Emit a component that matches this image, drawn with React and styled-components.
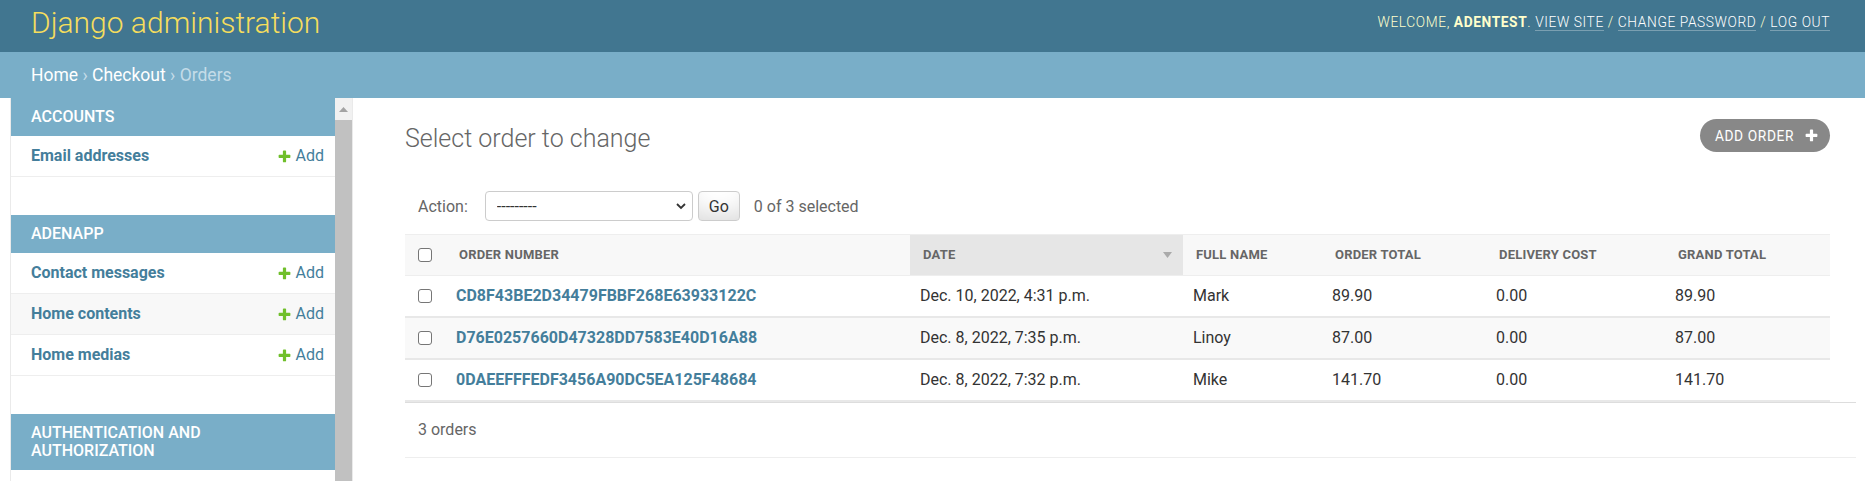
import React from 'react';
import styled, { createGlobalStyle } from 'styled-components';

const GlobalStyle = createGlobalStyle`
  html, body {
    margin: 0;
    padding: 0;
    background: #fff;
    overflow: hidden;
  }
  body {
    font-family: Roboto, "Liberation Sans", Arial, sans-serif;
    font-size: 16px;
    color: #333;
  }
`;

const Page = styled.div`
  width: 1865px;
  height: 100vh;
  display: flex;
  flex-direction: column;
`;

const Header = styled.header`
  display: flex;
  justify-content: space-between;
  align-items: center;
  height: 44px;
  padding: 0 35px 8px 31px;
  background: #417690;
`;

const Branding = styled.h1`
  margin: 0;
  font-size: 30px;
  line-height: 35px;
  font-weight: 300;
  color: #f5dd5d;
`;

const UserTools = styled.div`
  font-size: 13.75px;
  font-weight: 300;
  letter-spacing: 0.6px;
  text-transform: uppercase;
  color: #ffc;

  strong {
    font-weight: 700;
  }
`;

const ToolLink = styled.a`
  color: #fff;
  text-decoration: none;
  border-bottom: 1px solid rgba(255, 255, 255, 0.3);
`;

const Breadcrumbs = styled.div`
  padding: 12px 31px;
  line-height: 22px;
  font-size: 17.5px;
  background: #79aec8;
  color: #c4dce8;

  a {
    color: #fff;
    text-decoration: none;
  }
`;

const Main = styled.div`
  flex: 1;
  min-height: 0;
  display: flex;
  align-items: stretch;
`;

const ToggleStrip = styled.div`
  flex: 0 0 10px;
  border-right: 1px solid #eaeaea;
`;

const NavSidebar = styled.nav`
  flex: 0 0 auto;
  display: flex;
  overflow: hidden;
  border-right: 1px solid #eaeaea;
`;

const ModuleList = styled.div`
  width: 324px;
`;

const ScrollRail = styled.div`
  width: 17px;
  display: flex;
  flex-direction: column;
  background: #f1f1f1;
`;

const ScrollArrow = styled.div`
  height: 22px;
  display: flex;
  justify-content: center;
  align-items: center;
`;

const ScrollThumb = styled.div`
  flex: 1;
  background: #c1c1c1;
`;

const Module = styled.div`
  margin-bottom: 38px;
`;

const Caption = styled.div`
  padding: 10px 24px 10px 20px;
  line-height: 18px;
  font-size: 16px;
  font-weight: 500;
  text-transform: uppercase;
  color: #fff;
  background: #79aec8;
`;

const ModelRow = styled.div`
  display: flex;
  justify-content: space-between;
  align-items: center;
  padding: 10px 11px 10px 20px;
  line-height: 20px;
  border-bottom: 1px solid #eee;
  background: ${p => (p.$shaded ? '#f8f8f8' : '#fff')};
`;

const ModelName = styled.a`
  font-size: 16px;
  font-weight: 700;
  color: #447e9b;
  text-decoration: none;
`;

const AddLink = styled.a`
  display: flex;
  align-items: center;
  gap: 4px;
  font-size: 16px;
  color: #447e9b;
  text-decoration: none;
`;

const Content = styled.div`
  flex: 1;
  min-width: 0;
  padding: 26px 35px 0 52px;
`;

const TitleRow = styled.div`
  display: flex;
  justify-content: space-between;
  align-items: flex-start;
  margin-bottom: 25px;
`;

const Title = styled.h1`
  margin: 0;
  font-size: 25px;
  line-height: 29px;
  font-weight: 300;
  color: #666;
`;

const AddButton = styled.a`
  display: flex;
  align-items: center;
  gap: 10px;
  height: 33px;
  margin-top: -5px;
  padding: 0 11px 0 15px;
  box-sizing: border-box;
  border-radius: 17px;
  background: #888;
  color: #fff;
  font-size: 13.75px;
  letter-spacing: 0.6px;
  text-transform: uppercase;
  text-decoration: none;
`;

const Actions = styled.div`
  display: flex;
  align-items: center;
  padding: 13px;
  height: 30px;
  font-size: 16px;
  color: #666;
`;

const ActionLabel = styled.span`
  margin-right: 17px;
`;

const SelectWrap = styled.div`
  position: relative;
  width: 208px;
  height: 30px;

  svg {
    position: absolute;
    right: 7px;
    top: 12px;
    pointer-events: none;
  }
`;

const Select = styled.select`
  appearance: none;
  width: 100%;
  height: 100%;
  box-sizing: border-box;
  padding: 0 11px;
  border: 1px solid #ccc;
  border-radius: 4px;
  background: #fff;
  font-family: inherit;
  font-size: 16px;
  color: #333;
`;

const GoButton = styled.button`
  height: 30px;
  margin-left: 5px;
  padding: 0 10px;
  border: 1px solid #ccc;
  border-radius: 4px;
  background: #fff;
  box-shadow: 0 -18px 24px -12px rgba(0, 0, 0, 0.15) inset;
  font-family: inherit;
  font-size: 16px;
  color: #333;
`;

const Counter = styled.span`
  margin-left: 14px;
`;

const Results = styled.table`
  width: 100%;
  table-layout: fixed;
  border-collapse: collapse;
`;

const HeadCell = styled.th`
  padding: 10px 13px;
  line-height: 20px;
  font-size: 13px;
  font-weight: 700;
  letter-spacing: 0.2px;
  text-align: left;
  text-transform: uppercase;
  color: #666;
  white-space: nowrap;
  background: ${p => (p.$sorted ? '#e6e6e6' : '#f8f8f8')};
  border-top: 1px solid #eee;
  border-bottom: 1px solid #eee;
`;

const SortedHead = styled.div`
  display: flex;
  justify-content: space-between;
  align-items: center;
  margin-right: -2px;
`;

const Row = styled.tr`
  background: ${p => (p.$alt ? '#f9f9f9' : '#fff')};
`;

const Cell = styled.td`
  padding: 10px;
  line-height: 20px;
  font-size: 16px;
  color: #333;
  border-bottom: 2px solid #e8e8e8;
  vertical-align: middle;
  white-space: nowrap;

  &:first-child {
    padding-left: 13px;
  }
`;

const OrderLink = styled.a`
  font-weight: 700;
  color: #447e9b;
  text-decoration: none;
`;

const Checkbox = styled.input.attrs({ type: 'checkbox' })`
  appearance: none;
  display: block;
  width: 14px;
  height: 14px;
  margin: 0;
  border: 1px solid #767676;
  border-radius: 3px;
  background: #fff;
`;

const Paginator = styled.p`
  margin: 0 -26px 0 0;
  padding: 13px;
  line-height: 28px;
  font-size: 16px;
  color: #666;
  border-top: 1px solid #ddd;
  border-bottom: 1px solid #eee;
`;

const PlusIcon = ({ color, size = 15 }) => (
  <svg width={size} height={size} viewBox="0 0 1792 1792">
    <path
      fill={color}
      d="M1600 796v192q0 40-28 68t-68 28h-416v416q0 40-28 68t-68 28h-192q-40 0-68-28t-28-68v-416h-416q-40 0-68-28t-28-68v-192q0-40 28-68t68-28h416v-416q0-40 28-68t68-28h192q40 0 68 28t28 68v416h416q40 0 68 28t28 68z"
    />
  </svg>
);

// only the part of the app list that fits above the fold
const apps = [
  { name: 'Accounts', models: ['Email addresses'] },
  { name: 'Adenapp', models: ['Contact messages', 'Home contents', 'Home medias'] },
  { name: 'Authentication and Authorization', models: [] },
];

const columns = [
  { label: '', width: 41 },
  { label: 'Order number', width: 464 },
  { label: 'Date', width: 273, sorted: true },
  { label: 'Full name', width: 139 },
  { label: 'Order total', width: 164 },
  { label: 'Delivery cost', width: 179 },
  { label: 'Grand total', width: 165 },
];

const orders = [
  ['CD8F43BE2D34479FBBF268E63933122C', 'Dec. 10, 2022, 4:31 p.m.', 'Mark', '89.90', '0.00', '89.90'],
  ['D76E0257660D47328DD7583E40D16A88', 'Dec. 8, 2022, 7:35 p.m.', 'Linoy', '87.00', '0.00', '87.00'],
  ['0DAEEFFFEDF3456A90DC5EA125F48684', 'Dec. 8, 2022, 7:32 p.m.', 'Mike', '141.70', '0.00', '141.70'],
];

export default function App() {
  return (
    <Page>
      <GlobalStyle />
      <Header>
        <Branding>Django administration</Branding>
        <UserTools>
          Welcome, <strong>adentest</strong>. <ToolLink href="#">View site</ToolLink> /{' '}
          <ToolLink href="#">Change password</ToolLink> / <ToolLink href="#">Log out</ToolLink>
        </UserTools>
      </Header>
      <Breadcrumbs>
        <a href="#">Home</a> › <a href="#">Checkout</a> › Orders
      </Breadcrumbs>
      <Main>
        <ToggleStrip />
        <NavSidebar>
          <ModuleList>
            {apps.map(app => (
              <Module key={app.name}>
                <Caption>{app.name}</Caption>
                {app.models.map(model => (
                  <ModelRow key={model} $shaded={model === 'Home contents'}>
                    <ModelName href="#">{model}</ModelName>
                    <AddLink href="#">
                      <PlusIcon color="#70bf2b" />
                      Add
                    </AddLink>
                  </ModelRow>
                ))}
              </Module>
            ))}
          </ModuleList>
          <ScrollRail>
            <ScrollArrow>
              <svg width="9" height="5" viewBox="0 0 9 5">
                <polygon points="0,5 4.5,0 9,5" fill="#a3a3a3" />
              </svg>
            </ScrollArrow>
            <ScrollThumb />
          </ScrollRail>
        </NavSidebar>
        <Content>
          <TitleRow>
            <Title>Select order to change</Title>
            <AddButton href="#">
              Add order
              <PlusIcon color="#fff" />
            </AddButton>
          </TitleRow>
          <Actions>
            <ActionLabel>Action:</ActionLabel>
            <SelectWrap>
              <Select defaultValue="">
                <option value="">---------</option>
                <option value="delete">Delete selected orders</option>
              </Select>
              <svg width="10" height="7" viewBox="0 0 10 7">
                <polyline points="1,1 5,5 9,1" fill="none" stroke="#333" strokeWidth="1.8" />
              </svg>
            </SelectWrap>
            <GoButton>Go</GoButton>
            <Counter>0 of 3 selected</Counter>
          </Actions>
          <Results>
            <colgroup>
              {columns.map((c, i) => (
                <col key={i} style={{ width: c.width }} />
              ))}
            </colgroup>
            <thead>
              <tr>
                {columns.map((c, i) => (
                  <HeadCell key={i} $sorted={c.sorted}>
                    {i === 0 ? (
                      <Checkbox />
                    ) : c.sorted ? (
                      <SortedHead>
                        {c.label}
                        <svg width="9" height="6" viewBox="0 0 9 6">
                          <polygon points="0,0 9,0 4.5,6" fill="#aaa" />
                        </svg>
                      </SortedHead>
                    ) : (
                      c.label
                    )}
                  </HeadCell>
                ))}
              </tr>
            </thead>
            <tbody>
              {orders.map((o, idx) => (
                <Row key={o[0]} $alt={idx % 2 === 1}>
                  <Cell>
                    <Checkbox />
                  </Cell>
                  <Cell>
                    <OrderLink href="#">{o[0]}</OrderLink>
                  </Cell>
                  {o.slice(1).map((v, j) => (
                    <Cell key={j}>{v}</Cell>
                  ))}
                </Row>
              ))}
            </tbody>
          </Results>
          <Paginator>3 orders</Paginator>
        </Content>
      </Main>
    </Page>
  );
}
